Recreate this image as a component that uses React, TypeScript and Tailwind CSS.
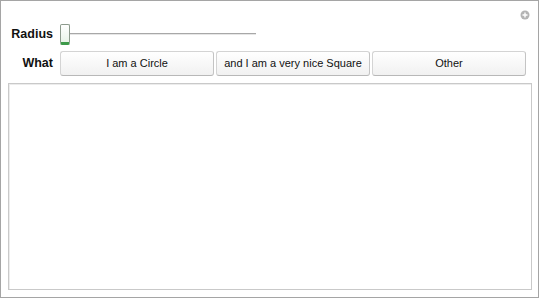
import { useState } from 'react';

const options = ['I am a Circle', 'and I am a very nice Square', 'Other'];

export default function App() {
  const [radius] = useState(0);
  const [what, setWhat] = useState<string | null>(null);

  return (
    <div className="w-[540px] h-[300px] bg-white" style={{ fontFamily: '"Liberation Sans", Arial, sans-serif' }}>
      <div className="relative w-[539px] h-[298px] border border-[#a5a5a5] flex flex-col">
        {/* corner add icon */}
        <svg className="absolute right-[8px] top-[9px]" width="10" height="10" viewBox="0 0 10 10">
          <circle cx="5" cy="5" r="4.5" fill="#b4b4b4" />
          <path d="M5 2.5v5M2.5 5h5" stroke="#fff" strokeWidth="1.4" />
        </svg>

        <div className="flex items-center mt-[23px] h-[21px]">
          <div className="w-[52px] text-right text-[12.5px] font-bold text-[#111]">Radius</div>
          <div className="relative ml-[7px] w-[196px] h-[21px] flex items-center">
            <div className="absolute left-[9px] right-0 top-[9px] h-[2px] border-t border-[#a8a8a8] border-b border-b-[#e6e6e6]" />
            <div
              className="relative w-[10px] h-[21px] rounded-[2px] border border-[#8c9a8c] bg-gradient-to-b from-white to-[#e8f3e8] border-b-[3px] border-b-[#3d9a4a]"
              title={String(radius)}
            />
          </div>
        </div>

        <div className="flex items-center mt-[6px] h-[25px]">
          <div className="w-[52px] text-right text-[12.5px] font-bold text-[#111]">What</div>
          <div className="ml-[7px] flex gap-[2px]">
            {options.map((o) => (
              <button
                key={o}
                onClick={() => setWhat(o)}
                className={`w-[154px] h-[25px] rounded-[3px] border border-[#d4d4d4] border-b-[#b8b8b8] border-r-[#c4c4c4] bg-gradient-to-b from-white to-[#f1f1f1] text-[11px] text-[#111] ${what === o ? 'from-[#f0f0f0]' : ''}`}
              >
                {o}
              </button>
            ))}
          </div>
        </div>

        <div className="ml-[7px] mt-[7px] w-[524px] h-[207px] border border-[#c9c9c9] bg-white shadow-[inset_1px_1px_0_#ececec]" />
      </div>
    </div>
  );
}
